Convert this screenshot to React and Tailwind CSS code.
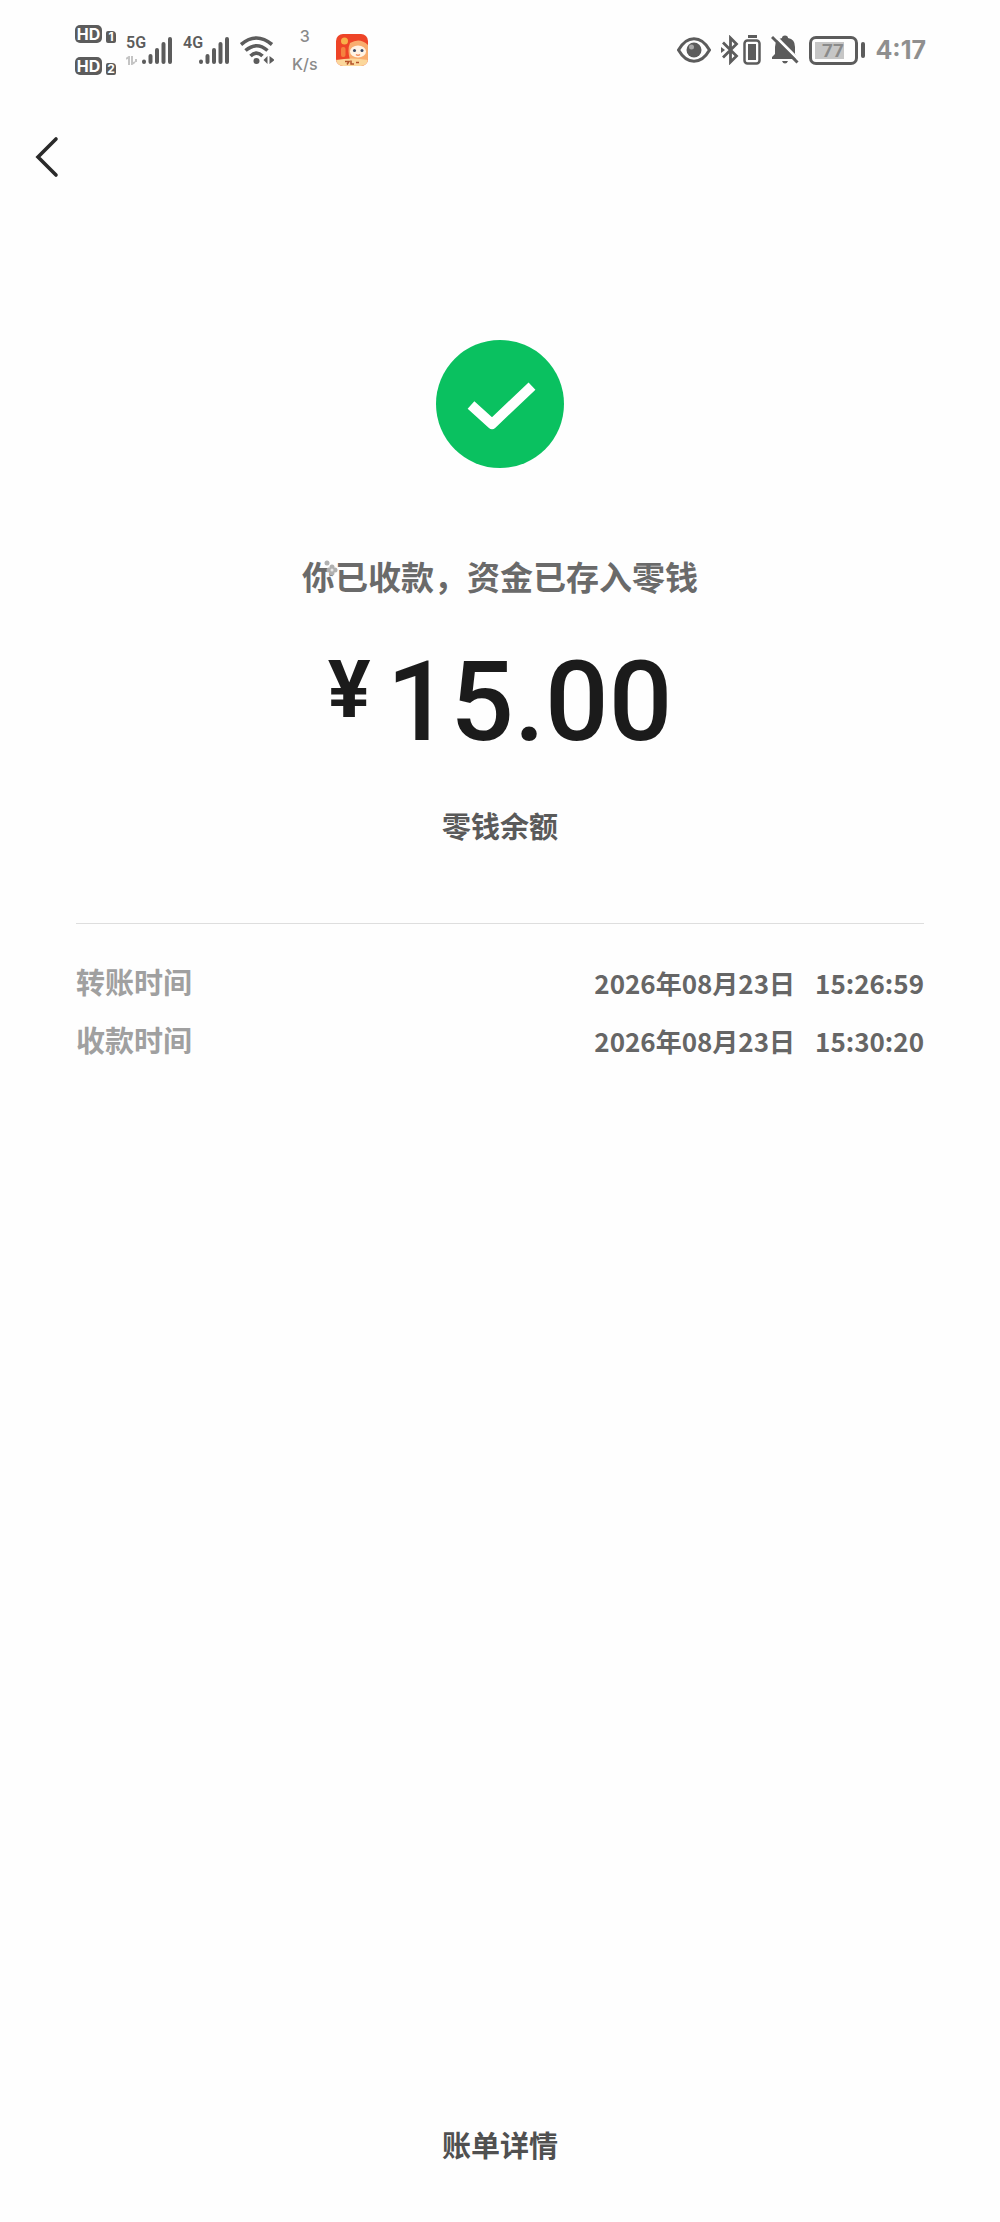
import React from "react";

const AMOUNT = "15.00";

const TIMES = [
  { label: "转账时间", date: "2026年08月23日", time: "15:26:59" },
  { label: "收款时间", date: "2026年08月23日", time: "15:30:20" },
];

/** One "HD" tag with its SIM number. */
function HdTag({ sim }) {
  return (
    <div className="flex items-end gap-1">
      <span className="flex h-[18px] w-[27px] items-center justify-center rounded-[5px] bg-[#5c5c5c] text-[16px] leading-none font-bold text-white">
        HD
      </span>
      <span className="flex h-3 w-[10px] items-center justify-center rounded-[2px] rounded-tr-[4px] bg-[#5c5c5c] text-[12px] leading-none font-bold text-white">
        {sim}
      </span>
    </div>
  );
}

/** Network generation above five rising signal bars. */
function Signal({ label, idle }) {
  return (
    <div className="flex h-[29px]">
      <div className="flex w-4 flex-col justify-between">
        <span className="font-['Roboto',sans-serif] text-[16px] leading-[14px] font-semibold">{label}</span>
        {idle && (
          <svg viewBox="0 0 12 9" className="h-[9px] w-3" fill="none" stroke="#c4c4c4" strokeWidth="2">
            <path d="M0 3 3 1v8M6 0v8l3-2M10 3v3" />
          </svg>
        )}
      </div>
      <svg viewBox="0 0 31 28" className="h-7 w-[31px]" stroke="#5c5c5c" strokeWidth="4" strokeLinecap="round">
        <path d="M2 25.500v.500M8.500 20v6M15 14v12M21.500 8v18M28 3v23" />
      </svg>
    </div>
  );
}

function WifiIcon() {
  return (
    <svg viewBox="0 0 34 29" className="h-[29px] w-[34px]" fill="none" stroke="#5c5c5c" strokeWidth="3.600">
      <path d="M1 8.500Q16.500-4.500 32 8.500M5.500 14.500Q16.500 5 27.500 14.500M10.500 20Q16.500 14 22.500 20" />
      <circle cx="16.500" cy="25" r="3" fill="#5c5c5c" stroke="none" />
      <path d="M27.500 20v8l-4-4zM29.500 20v8l5-4z" fill="#5c5c5c" stroke="none" />
    </svg>
  );
}

/** Notification icon of the running app. */
function AppIcon() {
  return (
    <svg viewBox="0 0 32 32" className="h-8 w-8">
      <defs>
        <clipPath id="app-clip">
          <rect width="32" height="32" rx="7" />
        </clipPath>
      </defs>
      <g clipPath="url(#app-clip)">
        <rect width="32" height="32" fill="#ee4427" />
        <path d="M14 9Q24 3 32 11v15H14Q11 16 14 9z" fill="#f9ad6e" />
        <circle cx="8.500" cy="7" r="3.500" fill="#f8b04a" />
        <rect x="5" y="13" width="4.500" height="10" rx="2" fill="#f5823f" />
        <ellipse cx="22" cy="17.500" rx="8" ry="6" fill="#fff3e4" />
        <circle cx="18.500" cy="16.500" r="1.500" fill="#3c4a66" />
        <circle cx="26" cy="16.500" r="1.500" fill="#3c4a66" />
        <path d="M20 20.500q2 1.500 4 0" stroke="#f18a5a" strokeWidth="1.500" fill="none" />
        <path d="M0 26q16-3 32 0v6H0z" fill="#fbd79b" />
        <path d="M9 27.500h4l-2 3M15 26.500v3.500h3M20 28.500h3" stroke="#b4532a" strokeWidth="1.500" fill="none" />
      </g>
    </svg>
  );
}

function EyeIcon() {
  return (
    <svg viewBox="0 0 34 26" className="h-[26px] w-[34px]">
      <path d="M1.500 13C10-2 24-2 32.500 13 24 28 10 28 1.500 13z" fill="none" stroke="#5c5c5c" strokeWidth="3" />
      <circle cx="17" cy="13" r="7.500" fill="#5c5c5c" />
      <circle cx="14.500" cy="10" r="2.500" fill="#a8a8a8" />
    </svg>
  );
}

function BluetoothIcon() {
  return (
    <svg viewBox="0 0 18 30" className="h-[30px] w-[18px]" fill="none" stroke="#5c5c5c" strokeWidth="2.800">
      <path d="M2 7.500 15.500 21 9.500 27V3l6 6L2 22.500" />
      <path d="M0 12l4 3-4 3z" fill="#5c5c5c" stroke="none" />
    </svg>
  );
}

function DeviceBatteryIcon() {
  return (
    <svg viewBox="0 0 18 30" className="h-[30px] w-[18px]">
      <rect x="5" width="9" height="3" fill="#5c5c5c" />
      <rect x="1.500" y="5.500" width="15" height="23" rx="3" fill="none" stroke="#5c5c5c" strokeWidth="2.500" />
      <rect x="5" y="9" width="8" height="16" fill="#5c5c5c" />
    </svg>
  );
}

function BellOffIcon() {
  return (
    <svg viewBox="0 0 28 30" className="h-[30px] w-7">
      <path d="M1 24v-2l3-3v-7Q4 4 11 3q0-2.500 3-2.500T17 3q7 1 7 9v7l2 3v2z" fill="#5c5c5c" />
      <path d="M11 26h6q-1 2.500-3 2.500T11 26z" fill="#5c5c5c" />
      <path d="M3 0 29 26" stroke="#fefefe" strokeWidth="3" />
      <path d="M1 2 26.500 27.500" stroke="#5c5c5c" strokeWidth="3" />
    </svg>
  );
}

function BatteryLevel({ value }) {
  return (
    <div className="flex items-center gap-[3px]">
      <div className="h-[29px] w-[49px] rounded-[7px] border-3 border-[#5c5c5c] p-[3px]">
        <div
          className="flex h-full items-center justify-end bg-[#c6c6c6] font-['Roboto',sans-serif] text-[19px] leading-none font-bold text-[#8a8a8a]"
          style={{ width: `${value}%` }}
        >
          {value}
        </div>
      </div>
      <div className="h-4 w-1 rounded-sm bg-[#5c5c5c]" />
    </div>
  );
}

function StatusBar() {
  return (
    <header className="flex h-[100px] items-center justify-between pr-[74px] pl-[75px] font-['Inter',sans-serif] text-[#5c5c5c]">
      <div className="flex items-center gap-[10px]">
        <div className="flex flex-col gap-[14px]">
          <HdTag sim="1" />
          <HdTag sim="2" />
        </div>
        <Signal label="5G" idle />
        <Signal label="4G" />
        <WifiIcon />
        <div className="ml-2 flex flex-col items-center gap-3 text-[16px] leading-4 font-medium text-[#8a8a8a]">
          <span>3</span>
          <span>K/s</span>
        </div>
        <div className="ml-2">
          <AppIcon />
        </div>
      </div>
      <div className="flex items-center gap-[10px]">
        <EyeIcon />
        <div className="flex gap-1">
          <BluetoothIcon />
          <DeviceBatteryIcon />
        </div>
        <BellOffIcon />
        <BatteryLevel value={77} />
        <time className="text-[25px] leading-none font-bold text-[#8f8f8f]">4:17</time>
      </div>
    </header>
  );
}

export default function App() {
  return (
    <div className="flex min-h-screen flex-col bg-[#fefefe] font-['Noto_Sans_CJK_SC',sans-serif] font-bold text-[#5a5a5a]">
      <StatusBar />

      <nav className="flex h-[114px] items-center px-8">
        <button type="button" aria-label="返回">
          <svg viewBox="0 0 28 42" className="h-[42px] w-7" fill="none" stroke="#2a2a2a" strokeWidth="3.600" strokeLinecap="round">
            <path d="M24 3 6 21 24 39" />
          </svg>
        </button>
      </nav>

      <main className="flex flex-1 flex-col px-[76px]">
        {/* Result */}
        <section className="flex flex-col items-center pt-[126px]">
          <svg viewBox="0 0 128 128" className="size-32">
            <circle cx="64" cy="64" r="64" fill="#0ac160" />
            <path d="M35 65 56 84 96 46" fill="none" stroke="#fff" strokeWidth="10" strokeLinejoin="round" />
          </svg>

          <div className="relative mt-[84px]">
            <h1 className="text-[33px] leading-[48px] text-[#6a6a6a]">你已收款，资金已存入零钱</h1>
            {/* small flowers on the first character */}
            <svg viewBox="0 0 16 16" className="absolute top-2 left-5 size-4">
              <g fill="#b0b0b0">
                <circle cx="5" cy="3" r="2.500" />
                <circle cx="10" cy="7" r="2.500" />
                <circle cx="13" cy="10" r="2.500" />
                <circle cx="10" cy="13" r="2.500" />
                <circle cx="7" cy="10" r="2.500" />
              </g>
              <circle cx="10" cy="10" r="1.500" fill="#e6e6e6" />
            </svg>
          </div>

          <p className="mt-[42px] flex items-start gap-4 font-['Roboto',sans-serif] text-[#1b1b1b]">
            <span className="text-[80px] leading-[96px] font-bold">¥</span>
            <span className="text-[112px] leading-[120px] font-medium">{AMOUNT}</span>
          </p>

          <p className="mt-[39px] text-[29px] leading-[48px]">零钱余额</p>
        </section>

        <hr className="mt-[74px] border-[#dedede]" />

        <dl className="mt-[29px]">
          {TIMES.map((row) => (
            <div key={row.label} className="flex h-[58px] items-center justify-between">
              <dt className="text-[29px] text-[#a0a0a0]">{row.label}</dt>
              <dd className="flex gap-5 text-[26px] text-[#666666]">
                <span>{row.date}</span>
                <span>{row.time}</span>
              </dd>
            </div>
          ))}
        </dl>
      </main>

      <footer className="flex justify-center pb-[54px]">
        <a href="#bill" className="text-[29px] leading-[48px] text-[#505050]">
          账单详情
        </a>
      </footer>
    </div>
  );
}
